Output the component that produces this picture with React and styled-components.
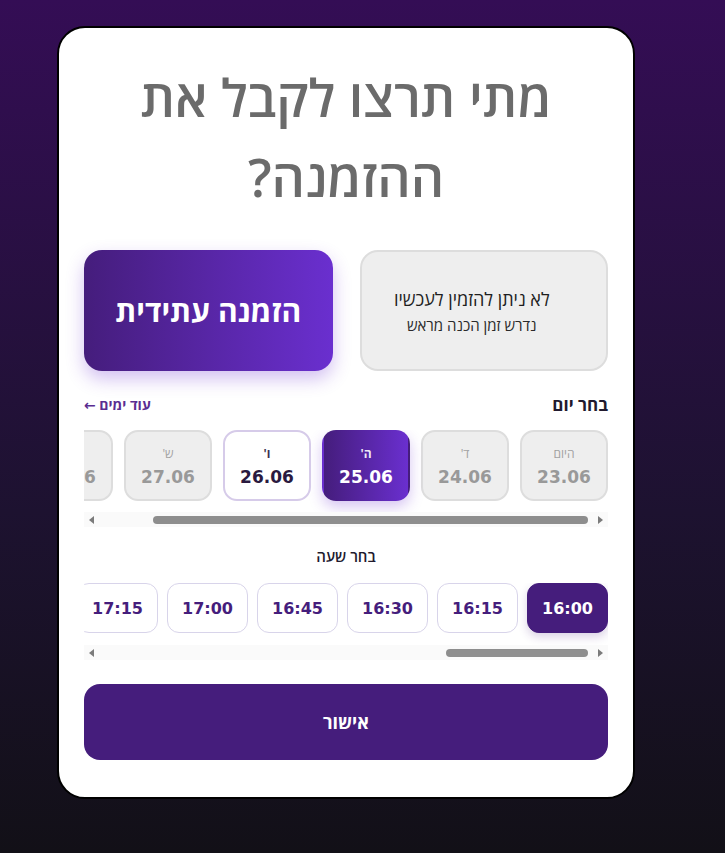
import styled, { createGlobalStyle } from "styled-components";

const GlobalStyle = createGlobalStyle`
  html, body {
    margin: 0;
    padding: 0;
  }
  body {
    min-height: 853px;
    background: linear-gradient(180deg, #340d55 0%, #1d1230 60%, #121017 100%);
    font-family: "Open Sans", "DejaVu Sans", sans-serif;
  }
`;

const Page = styled.div`
  padding: 26px 0 40px 57px;
`;

const Card = styled.div`
  direction: rtl;
  box-sizing: border-box;
  width: 578px;
  background: #ffffff;
  border: 2px solid #000000;
  border-radius: 28px;
  padding: 29px 25px 37px;
`;

const Title = styled.h1`
  margin: 0;
  text-align: center;
  color: #6b6b6b;
  font-size: 52px;
  font-weight: 600;
  line-height: 80px;
`;

const ModeRow = styled.div`
  display: grid;
  grid-template-columns: 1fr 1fr;
  gap: 27px;
  margin-top: 33px;
`;

const NowBox = styled.div`
  box-sizing: border-box;
  height: 121px;
  border-radius: 18px;
  background: #eeeeee;
  border: 2px solid #dddddd;
  display: flex;
  flex-direction: column;
  align-items: center;
  justify-content: center;
  gap: 4px;
  padding-right: 24px;
  color: #1e1e1e;
`;

const NowMain = styled.div`
  font-size: 18px;
`;

const NowSub = styled.div`
  font-size: 15px;
  color: #2a2a2a;
`;

const FutureButton = styled.button`
  height: 121px;
  border: none;
  border-radius: 18px;
  background: linear-gradient(90deg, #451d7c 0%, #6a2fcf 100%);
  box-shadow: 0 8px 18px rgba(106, 47, 207, 0.3);
  color: #ffffff;
  font-family: inherit;
  font-size: 30px;
  font-weight: 700;
  cursor: pointer;
`;

const SectionHead = styled.div`
  display: flex;
  justify-content: space-between;
  align-items: center;
  margin-top: 23px;
  height: 20px;
`;

const HeadLabel = styled.div`
  font-size: 17px;
  font-weight: 700;
  color: #221a2e;
`;

const MoreLink = styled.a`
  font-size: 14px;
  font-weight: 700;
  color: #5a2d91;
  text-decoration: none;
  cursor: pointer;
`;

const Scroller = styled.div`
  display: flex;
  gap: ${({ $gap }) => $gap}px;
  overflow-x: auto;
  scrollbar-width: none;
  margin-top: ${({ $top }) => $top}px;
  padding-bottom: ${({ $pad }) => $pad}px;
`;

/* hand-drawn horizontal scrollbar under each strip */
const Bar = styled.div`
  direction: ltr;
  display: flex;
  align-items: center;
  height: 15px;
  background: #fafafa;
`;

const BarArrow = styled.span`
  flex: 0 0 15px;
  height: 15px;
  display: flex;
  align-items: center;
  justify-content: center;
`;

const BarTrack = styled.div`
  flex: 1;
  display: flex;
  justify-content: flex-end;
  padding: 0 5px;
`;

const BarThumb = styled.div`
  height: 8px;
  border-radius: 4px;
  background: #8e8e8e;
`;

const Arrow = ({ dir }) => (
  <svg width="5" height="8" viewBox="0 0 5 8">
    <polygon points={dir === "left" ? "5,0 5,8 0,4" : "0,0 0,8 5,4"} fill="#7b7b7b" />
  </svg>
);

const ScrollBar = ({ ratio }) => (
  <Bar>
    <BarArrow>
      <Arrow dir="left" />
    </BarArrow>
    <BarTrack>
      <BarThumb style={{ width: `${Math.min(ratio, 1) * 100}%` }} />
    </BarTrack>
    <BarArrow>
      <Arrow dir="right" />
    </BarArrow>
  </Bar>
);

const DayCard = styled.button`
  flex: 0 0 auto;
  box-sizing: border-box;
  width: 88px;
  height: 71px;
  border-radius: 14px;
  display: flex;
  flex-direction: column;
  align-items: center;
  justify-content: center;
  gap: 5px;
  cursor: pointer;
  font-family: inherit;
  border: 2px solid
    ${({ $state }) =>
      $state === "selected" ? "transparent" : $state === "soft" ? "#d6cbe9" : "#dddddd"};
  background: ${({ $state }) =>
    $state === "selected"
      ? "linear-gradient(90deg, #451d7c 0%, #6a2fcf 100%)"
      : $state === "soft"
      ? "#ffffff"
      : "#eeeeee"};
  box-shadow: ${({ $state }) =>
    $state === "selected" ? "0 6px 14px rgba(106, 47, 207, 0.28)" : "none"};
  color: ${({ $state }) =>
    $state === "selected" ? "#ffffff" : $state === "soft" ? "#2a1a40" : "#999999"};
`;

const DayName = styled.span`
  font-size: 12px;
  font-weight: ${({ $bold }) => ($bold ? 700 : 400)};
  opacity: 0.9;
`;

const DayDate = styled.span`
  font-family: "DejaVu Sans", sans-serif;
  font-size: 17px;
  font-weight: 700;
  direction: ltr;
`;

const TimeHead = styled.div`
  margin-top: 19px;
  text-align: center;
  font-size: 15px;
  font-weight: 600;
  color: #221a2e;
  height: 20px;
`;

const TimeSlot = styled.button`
  flex: 0 0 auto;
  box-sizing: border-box;
  width: 81px;
  height: 50px;
  border-radius: 12px;
  border: 1px solid ${({ $active }) => ($active ? "#451d7c" : "#d8d4ea")};
  background: ${({ $active }) => ($active ? "#451d7c" : "#ffffff")};
  color: ${({ $active }) => ($active ? "#ffffff" : "#451d7c")};
  box-shadow: ${({ $active }) => ($active ? "0 4px 10px rgba(69, 29, 124, 0.2)" : "none")};
  font-family: "DejaVu Sans", sans-serif;
  font-size: 16px;
  font-weight: 700;
  cursor: pointer;
`;

const ConfirmButton = styled.button`
  display: block;
  width: 100%;
  height: 76px;
  margin-top: 24px;
  border: none;
  border-radius: 16px;
  background: #451d7c;
  color: #ffffff;
  font-family: inherit;
  font-size: 18px;
  font-weight: 700;
  cursor: pointer;
`;

const days = [
  { name: "היום", date: "23.06", state: "muted" },
  { name: "ד'", date: "24.06", state: "muted" },
  { name: "ה'", date: "25.06", state: "selected" },
  { name: "ו'", date: "26.06", state: "soft" },
  { name: "ש'", date: "27.06", state: "muted" },
  { name: "א'", date: "28.06", state: "muted" },
];

const times = [];
for (let h = 16; h <= 20; h++) {
  for (const m of ["00", "15", "30", "45"]) times.push(`${h}:${m}`);
}

const VIEW = 524;
const dayRatio = VIEW / (days.length * 88 + (days.length - 1) * 11);
const timeRatio = VIEW / (times.length * 81 + (times.length - 1) * 9);

export default function App() {
  return (
    <>
      <GlobalStyle />
      <Page>
        <Card>
          <Title>
            מתי תרצו לקבל את
            <br />
            ההזמנה?
          </Title>

          <ModeRow>
            <NowBox>
              <NowMain>לא ניתן להזמין לעכשיו</NowMain>
              <NowSub>נדרש זמן הכנה מראש</NowSub>
            </NowBox>
            <FutureButton>הזמנה עתידית</FutureButton>
          </ModeRow>

          <SectionHead>
            <HeadLabel>בחר יום</HeadLabel>
            <MoreLink>עוד ימים ←</MoreLink>
          </SectionHead>

          <Scroller $gap={11} $pad={11} $top={16}>
            {days.map((d) => (
              <DayCard key={d.date} $state={d.state}>
                <DayName $bold={d.state !== "muted"}>{d.name}</DayName>
                <DayDate>{d.date}</DayDate>
              </DayCard>
            ))}
          </Scroller>
          <ScrollBar ratio={dayRatio} />

          <TimeHead>בחר שעה</TimeHead>

          <Scroller $gap={9} $pad={12} $top={17}>
            {times.map((t, i) => (
              <TimeSlot key={t} $active={i === 0}>
                {t}
              </TimeSlot>
            ))}
          </Scroller>
          <ScrollBar ratio={timeRatio} />

          <ConfirmButton>אישור</ConfirmButton>
        </Card>
      </Page>
    </>
  );
}
